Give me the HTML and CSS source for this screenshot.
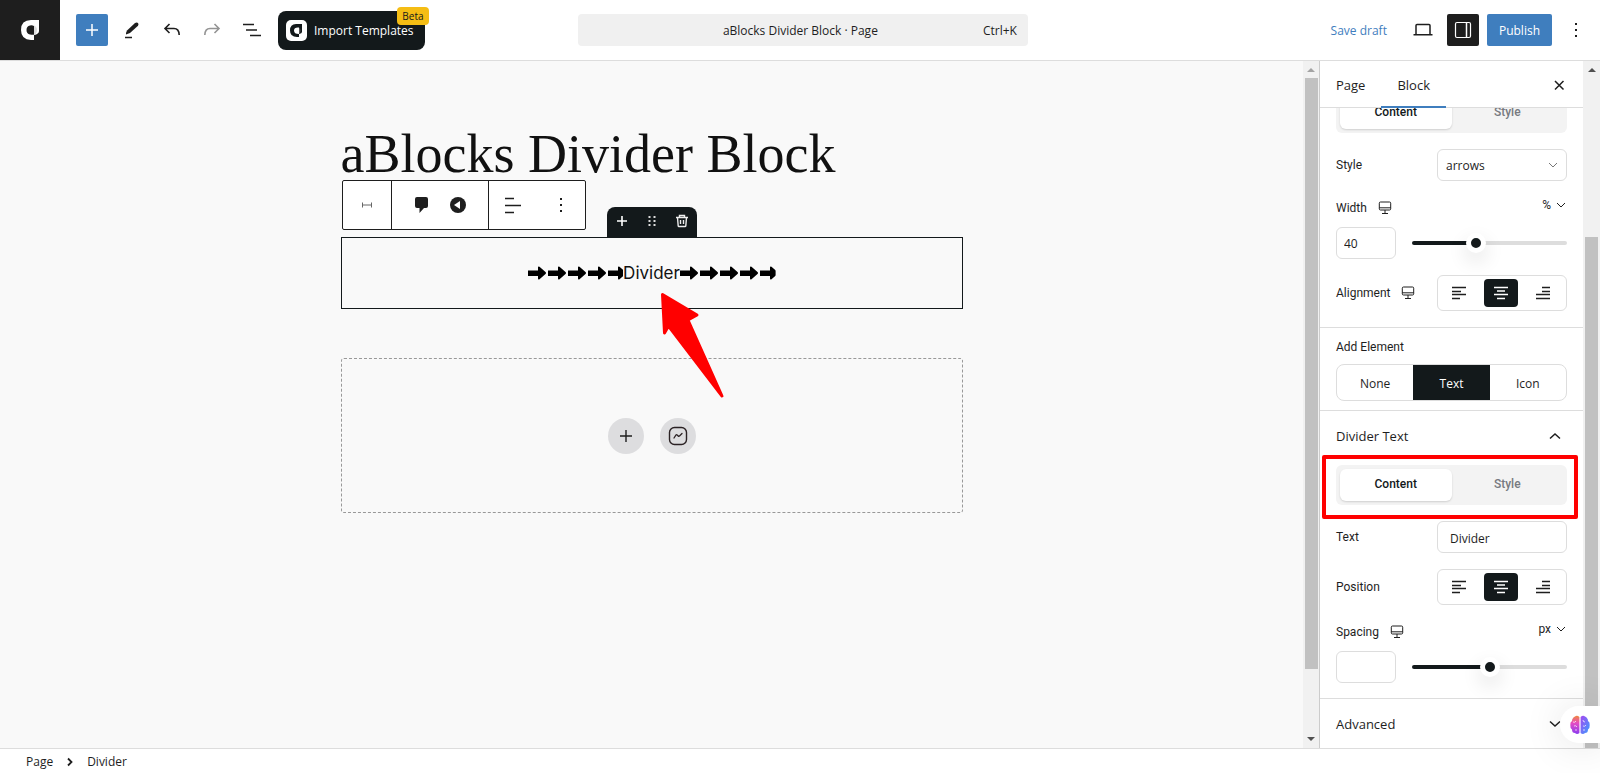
FILE: index.html
```
<!DOCTYPE html>
<html lang="en">
<head>
  <meta charset="UTF-8">
  <title>aBlocks Divider Block</title>
  <link rel="stylesheet" href="styles.css">
</head>
<body>

<!-- shared shapes -->
<svg class="defs" width="0" height="0" aria-hidden="true">
  <defs>
    <pattern id="arrows" width="20" height="14" patternUnits="userSpaceOnUse">
      <path d="M0 4.500h10V1.500q0-1.500 1.500-.8l6 5.200q1 1 0 2l-6 5.400q-1.500.8-1.500-.8V10H0z"/>
    </pattern>
    <symbol id="desktop" viewBox="0 0 14 14">
      <path d="M2.500 1h9q1.200 0 1.200 1.200v5.600q0 1.200-1.200 1.200h-9q-1.200 0-1.200-1.200V2.200Q1.300 1 2.500 1zM1.300 6.800h11.400M7 9v3.500M4 12.500h6" fill="none" stroke="currentColor"/>
    </symbol>
    <symbol id="al-left" viewBox="0 0 14 14">
      <path d="M0 1.500h14M0 5.500h9M0 8.500h14M0 12.500h8" stroke="currentColor" stroke-width="1.300"/>
    </symbol>
    <symbol id="al-center" viewBox="0 0 14 14">
      <path d="M0 1.500h14M3 5h8M0 8.500h14M3 12.500h8" stroke="currentColor" stroke-width="1.300"/>
    </symbol>
    <symbol id="al-right" viewBox="0 0 14 14">
      <path d="M6 1.500h8M6 5.500h8M0 8.500h14M0 12.500h14" stroke="currentColor" stroke-width="1.300"/>
    </symbol>
    <symbol id="chev" viewBox="0 0 12 12">
      <path d="M2 4l4 4 4-4" fill="none" stroke="currentColor"/>
    </symbol>
    <symbol id="chev-bold" viewBox="0 0 14 14">
      <path d="M2 4.500l5 4.500 5-4.500" fill="none" stroke="currentColor" stroke-width="1.500"/>
    </symbol>
  </defs>
</svg>

<header class="header">
  <div class="header-left">
    <a class="logo" href="#" aria-label="Back to dashboard">
      <svg width="18" height="20" viewBox="0 0 18 20"><path d="M18 0v11q0 3-5 4V6q-2-1-4-.5-3.500.8-3.500 4.500T9 14.500q2 .5 4 .3V20h-3Q0 19.500 0 10 0 0 10 0z" fill="#fff"/><path d="M13 5.500q3 1 3 4.500t-3 5z" fill="#ddd"/></svg>
    </a>
    <div class="tools">
      <button class="tool add" aria-label="Add block"><svg width="24" height="24" viewBox="0 0 24 24"><path d="M12 6v12M6 12h12" stroke="#fff" stroke-width="1.500"/></svg></button>
      <button class="tool" aria-label="Tools"><svg width="24" height="24" viewBox="0 0 24 24"><path d="M6 15l1-2.500 8-7.500q1.800-1.200 3 0 1 1.300 0 2.800L10 15l-4 1.500z" fill="#1e1e1e"/><path d="M5 19.500h7" stroke="#1e1e1e" stroke-width="1.500"/></svg></button>
      <button class="tool" aria-label="Undo"><svg width="24" height="24" viewBox="0 0 24 24"><path d="M9.500 6L5 10.500 9.500 15M5 10.500h9q5 0 5.200 6.500" fill="none" stroke="#1e1e1e" stroke-width="1.600"/></svg></button>
      <button class="tool" aria-label="Redo" disabled><svg width="24" height="24" viewBox="0 0 24 24"><path d="M14.500 6l4.500 4.500-4.500 4.500M19 10.500h-9q-5 0-5.200 6.500" fill="none" stroke="#949494" stroke-width="1.600"/></svg></button>
      <button class="tool" aria-label="Document overview"><svg width="24" height="24" viewBox="0 0 24 24"><path d="M3 6.500h11M6 12h11M10 17.500h11" stroke="#1e1e1e" stroke-width="1.500"/></svg></button>
      <button class="import">
        <svg width="21" height="21" viewBox="0 0 21 21"><rect width="21" height="21" rx="5" fill="#fff"/><path d="M16 4v8q0 1.500-3 2V7.500Q8 7 8 10.500q0 3.500 5 3.500v3h-2Q4 17 4 10.500T10 4z" fill="#13191b"/><path d="M13 7.500q1.500 1 1.500 3T13 14z" fill="#555"/></svg>
        <span>Import Templates</span>
        <span class="beta">Beta</span>
      </button>
    </div>
  </div>

  <button class="command">
    <span class="command-title">aBlocks Divider Block · Page</span>
    <span>Ctrl+K</span>
  </button>

  <div class="header-right">
    <button class="save">Save draft</button>
    <button class="tool" aria-label="View"><svg width="24" height="24" viewBox="0 0 24 24"><path d="M5 16V7.500Q5 6.500 6 6.500h12q1 0 1 1V16M2.500 16.800h19" fill="none" stroke="#1e1e1e" stroke-width="1.500"/></svg></button>
    <button class="tool dark" aria-label="Settings"><svg width="24" height="24" viewBox="0 0 24 24"><rect x="4.500" y="4.500" width="15" height="15" rx="1.500" fill="none" stroke="#fff" stroke-width="1.200"/><path d="M15.500 5v14" stroke="#fff" stroke-width="1.500"/></svg></button>
    <button class="publish">Publish</button>
    <button class="tool" aria-label="Options"><svg width="24" height="24" viewBox="0 0 24 24"><path d="M11 5h2v2h-2zM11 11h2v2h-2zM11 17h2v2h-2z" fill="#1e1e1e"/></svg></button>
  </div>
</header>

<div class="main">
  <div class="canvas">
    <div class="content">
      <h1>aBlocks Divider Block</h1>

      <div class="block">
        <div class="toolbar">
          <button class="tb-type" aria-label="Divider"><svg width="12" height="8" viewBox="0 0 12 8"><path d="M1.500 1.500v5M10.500 1.500v5M2 4h8" stroke="#666" stroke-width="1"/></svg></button>
          <div class="tb-group">
            <button aria-label="Comment"><svg width="24" height="24" viewBox="0 0 24 24"><path d="M7 4h9q2 0 2 2v7q0 2-2 2h-2l-4.500 5v-5H7q-2 0-2-2V6q0-2 2-2z" fill="#1e1e1e"/></svg></button>
            <button aria-label="Previous"><svg width="24" height="24" viewBox="0 0 24 24"><circle cx="12" cy="12" r="8" fill="#1e1e1e"/><path d="M14 8v8l-6-4z" fill="#fff"/></svg></button>
          </div>
          <div class="tb-group tb-last">
            <button aria-label="Align"><svg width="24" height="24" viewBox="0 0 24 24"><path d="M4 5.500h9M4 12.500h16M4 19.500h9" stroke="#1e1e1e" stroke-width="1.500"/></svg></button>
            <button aria-label="Options"><svg width="24" height="24" viewBox="0 0 24 24"><path d="M11 5h2v2h-2zM11 11h2v2h-2zM11 17h2v2h-2z" fill="#1e1e1e"/></svg></button>
          </div>
        </div>
        <div class="handle">
          <button aria-label="Add"><svg width="14" height="14" viewBox="0 0 14 14"><path d="M7 2v10M2 7h10" stroke="#fff" stroke-width="1.600"/></svg></button>
          <button aria-label="Drag"><svg width="14" height="14" viewBox="0 0 14 14"><path d="M3.500 2h2v2h-2zM8.500 2h2v2h-2zM3.500 6h2v2h-2zM8.500 6h2v2h-2zM3.500 10h2v2h-2zM8.500 10h2v2h-2z" fill="#ddd"/></svg></button>
          <button aria-label="Delete"><svg width="14" height="14" viewBox="0 0 14 14"><path d="M1 3.500h12M4.500 3.500v-2h5v2M2.500 3.500l.7 8.300q.1.700.8.700h6q.7 0 .8-.7l.7-8.300M5.500 6v4M8.500 6v4" fill="none" stroke="#eee" stroke-width="1.400"/></svg></button>
        </div>
        <div class="divider">
          <svg class="line" height="14"><rect width="100%" height="14" fill="url(#arrows)"/></svg>
          <span>Divider</span>
          <svg class="line" height="14"><rect width="100%" height="14" fill="url(#arrows)"/></svg>
        </div>
        <svg class="pointer" width="70" height="110" viewBox="0 0 70 110"><path d="M6.500 4.500L41 25l-9 5 34 76L12.500 36l-4 7z" fill="#f00" stroke="#f00" stroke-width="3" stroke-linejoin="round"/></svg>
      </div>

      <div class="placeholder">
        <button aria-label="Add container"><svg width="24" height="24" viewBox="0 0 24 24"><path d="M12 6v12M6 12h12" stroke="#1e1e1e" stroke-width="1.400"/></svg></button>
        <button aria-label="Template library"><svg width="20" height="20" viewBox="0 0 20 20"><rect x="1.500" y="1.500" width="17" height="17" rx="5" fill="none" stroke="#2b2224" stroke-width="1.400"/><path d="M6 12l2-3q.6-.7 1.200 0l1 1q.6.600 1.300 0L14 7.500" fill="none" stroke="#2b2224" stroke-width="1.300" stroke-linecap="round"/></svg></button>
      </div>
    </div>
  </div>

  <div class="scroll scroll-canvas">
    <i class="up"></i>
    <div class="thumb"></div>
    <i class="down"></i>
  </div>

  <aside class="sidebar">
    <div class="tabs">
      <button>Page</button>
      <button class="active">Block</button>
      <button class="close" aria-label="Close settings"><svg width="12" height="12" viewBox="0 0 12 12"><path d="M2 2l8.500 8.500M10.500 2L2 10.500" stroke="#1e1e1e" stroke-width="1.500"/></svg></button>
    </div>

    <div class="panels">
      <section class="panel panel-first">
        <div class="switch">
          <button class="active">Content</button>
          <button>Style</button>
        </div>
        <div class="row">
          <label for="style">Style</label>
          <div class="select">
            <select id="style"><option>arrows</option></select>
            <svg width="12" height="12"><use href="#chev"/></svg>
          </div>
        </div>
        <div class="range-head">
          <label for="width">Width</label>
          <svg width="14" height="14"><use href="#desktop"/></svg>
          <button class="unit">% <svg width="12" height="12"><use href="#chev"/></svg></button>
        </div>
        <div class="range">
          <input id="width" type="text" value="40">
          <input type="range" value="40" aria-label="Width" style="--fill: 40%">
        </div>
        <div class="row">
          <span class="label">Alignment</span>
          <svg width="14" height="14"><use href="#desktop"/></svg>
          <div class="align">
            <button aria-label="Left"><svg width="14" height="14"><use href="#al-left"/></svg></button>
            <button class="active" aria-label="Center"><svg width="14" height="14"><use href="#al-center"/></svg></button>
            <button aria-label="Right"><svg width="14" height="14"><use href="#al-right"/></svg></button>
          </div>
        </div>
      </section>

      <section class="panel panel-element">
        <span class="label">Add Element</span>
        <div class="group">
          <button>None</button>
          <button class="active">Text</button>
          <button>Icon</button>
        </div>
      </section>

      <section class="panel panel-text">
        <button class="panel-title">Divider Text <svg class="flip" width="14" height="14"><use href="#chev-bold"/></svg></button>
        <div class="marked">
          <div class="switch">
            <button class="active">Content</button>
            <button>Style</button>
          </div>
        </div>
        <div class="row">
          <label for="text">Text</label>
          <input id="text" type="text" value="Divider">
        </div>
        <div class="row">
          <span class="label">Position</span>
          <div class="align">
            <button aria-label="Left"><svg width="14" height="14"><use href="#al-left"/></svg></button>
            <button class="active" aria-label="Center"><svg width="14" height="14"><use href="#al-center"/></svg></button>
            <button aria-label="Right"><svg width="14" height="14"><use href="#al-right"/></svg></button>
          </div>
        </div>
        <div class="range-head">
          <label for="spacing">Spacing</label>
          <svg width="14" height="14"><use href="#desktop"/></svg>
          <button class="unit">px <svg width="12" height="12"><use href="#chev"/></svg></button>
        </div>
        <div class="range">
          <input id="spacing" type="text">
          <input type="range" value="50" aria-label="Spacing" style="--fill: 50%">
        </div>
      </section>

      <section class="panel panel-advanced">
        <button class="panel-title">Advanced <svg width="14" height="14"><use href="#chev-bold"/></svg></button>
      </section>
    </div>
  </aside>

  <div class="scroll scroll-side">
    <i class="up"></i>
    <div class="thumb"></div>
  </div>
</div>

<footer class="footer">
  <a href="#">Page</a>
  <svg width="8" height="10" viewBox="0 0 8 10"><path d="M2 1.500L5.500 5 2 8.500" fill="none" stroke="#1e1e1e" stroke-width="1.800"/></svg>
  <span>Divider</span>
</footer>

<button class="assistant" aria-label="Assistant">
  <svg width="20" height="20" viewBox="0 0 20 20">
    <defs>
      <linearGradient id="brain-l" x1="0" y1="0" x2="0" y2="1"><stop offset="0" stop-color="#f0883e"/><stop offset=".4" stop-color="#e54bc4"/><stop offset="1" stop-color="#8b3cf0"/></linearGradient>
      <linearGradient id="brain-r" x1="0" y1="0" x2="1" y2="1"><stop offset="0" stop-color="#a548f0"/><stop offset="1" stop-color="#3aa0ff"/></linearGradient>
    </defs>
    <path d="M9.400 2v16Q7 20 5 18q-3 0-3-3.500Q0 13 .3 10 0 7 2 6q0-3 3-4.500 2-1.500 4.400.5z" fill="url(#brain-l)"/>
    <path d="M10.600 2v16q2.400 2 4.400 0 3 0 3-3.500 2-1.500 1.700-4.500.3-3-1.700-4 0-3-3-4.500-2-1.500-4.400.5z" fill="url(#brain-r)"/>
    <path d="M3 7q2 1 3-1M4 11q2-1 3 1M5 15h2M13 5q0 2 2 2M13 11q2 1 3-1M13 15h2" fill="none" stroke="#fff" stroke-opacity=".7"/>
  </svg>
</button>

</body>
</html>
```
FILE: styles.css
```
*{
  box-sizing: border-box;
}
body{
  margin: 0;
  height: 100vh;
  display: flex;
  flex-direction: column;
  overflow: hidden;
  background: #fff;
  color: #1e1e1e;
  font: 12px/20px "Open Sans", "Noto Sans", sans-serif;
}
button,
input,
select{
  font: inherit;
  color: inherit;
}
button{
  display: flex;
  align-items: center;
  justify-content: center;
  padding: 0;
  border: 0;
  background: none;
}
a{
  color: inherit;
  text-decoration: none;
}
svg{
  flex: none;
}
.defs{
  position: absolute;
}

/* header */
.header{
  flex: none;
  display: grid;
  grid-template-columns: 1fr 450px 0.99fr;
  align-items: center;
  border-bottom: 1px solid #ddd;
}
.header-left,
.tools,
.header-right{
  display: flex;
  align-items: center;
}
.logo{
  width: 60px;
  height: 60px;
  display: flex;
  align-items: center;
  justify-content: center;
  background: #1e1e1e;
}
.tools{
  gap: 8px;
  padding-left: 16px;
}
.tool{
  width: 32px;
  height: 32px;
  border-radius: 2px;
}
.add{
  background: #3f7ebe;
}
.dark{
  background: #1e1e1e;
}
.import{
  position: relative;
  height: 39px;
  gap: 7px;
  padding: 0 11px 0 8px;
  margin-left: 2px;
  border-radius: 8px;
  background: #13191b;
  color: #fff;
}
.import span{
  padding-top: 2px;
}
.import .beta{
  position: absolute;
  top: -4px;
  right: -4px;
  padding: 0 5px;
  border-radius: 4px;
  background: #f5bd14;
  color: #13191b;
  font-size: 10px;
  line-height: 18px;
}
.command{
  height: 32px;
  padding: 2px 11px 0 12px;
  border-radius: 4px;
  background: #f0f0f0;
}
.command-title{
  flex: 1;
  padding-left: 28px;
}
.header-right{
  justify-content: flex-end;
  gap: 8px;
  padding-right: 8px;
}
.save{
  padding: 2px 12px 0;
  color: #3f7ebe;
}
.publish{
  height: 32px;
  padding: 2px 12px 0;
  border-radius: 2px;
  background: #3f7ebe;
  color: #fff;
  font-weight: 500;
}

/* canvas */
.main{
  flex: 1;
  min-height: 0;
  display: flex;
}
.canvas{
  flex: 1;
  overflow: hidden;
  background: #f9f9f9;
}
.content{
  max-width: 622px;
  margin: 0 auto;
  padding-top: 58px;
}
h1{
  margin: 0 0 48px;
  color: #111;
  font: 54px/70px "Liberation Serif", serif;
}
.block{
  position: relative;
  border: 1px solid #13191b;
}
.divider{
  width: 40%;
  height: 70px;
  margin: 0 auto;
  display: flex;
  align-items: center;
  color: #111;
  font: 17px/24px Inter, sans-serif;
}
.line{
  flex: 1;
  min-width: 0;
}
.toolbar{
  position: absolute;
  left: 0;
  bottom: 78px;
  height: 50px;
  display: flex;
  border: 1px solid #1e1e1e;
  border-radius: 2px;
  background: #fff;
}
.tb-type{
  width: 49px;
  border-right: 1px solid #1e1e1e;
}
.tb-group{
  display: flex;
  align-items: center;
  gap: 12px;
  padding: 0 18px;
  border-right: 1px solid #1e1e1e;
}
.tb-last{
  gap: 24px;
  padding: 0 12px;
  border: 0;
}
.handle{
  position: absolute;
  left: 50%;
  bottom: 100%;
  margin-left: -45px;
  width: 90px;
  height: 31px;
  display: flex;
  border-radius: 8px 8px 0 0;
  background: #13191b;
}
.handle button{
  flex: 1;
  padding-bottom: 3px;
}
.pointer{
  position: absolute;
  left: 50%;
  top: 52px;
  margin-left: 4px;
  z-index: 1;
}
.placeholder{
  height: 155px;
  margin-top: 49px;
  display: flex;
  align-items: center;
  justify-content: center;
  gap: 16px;
  border: 1px dashed #999;
  border-radius: 3px;
}
.placeholder button{
  width: 36px;
  height: 36px;
  border-radius: 50%;
  background: #dddddf;
}

/* scrollbars */
.scroll{
  flex: none;
  width: 17px;
  display: flex;
  flex-direction: column;
  align-items: center;
  background: #f1f1f1;
}
.scroll-canvas{
  width: 16px;
}
.thumb{
  width: 13px;
  margin-top: 6px;
  background: #c1c1c1;
}
.scroll-canvas .thumb{
  flex: 0 0 86%;
}
.scroll-side .thumb{
  flex: 1;
  margin-top: 165px;
}
.up,
.down{
  border: 4px solid transparent;
}
.up{
  margin-top: 3px;
  border-top: 0;
  padding-top: 3px;
  border-bottom: 4px solid #505050;
}
.scroll-canvas .up{
  border-bottom-color: #a3a3a3;
}
.down{
  margin: auto 0 7px;
  border-top: 4px solid #505050;
  border-bottom: 0;
}
.up{
  padding-top: 0;
  margin-top: 7px;
}

/* sidebar */
.sidebar{
  flex: none;
  width: 264px;
  display: flex;
  flex-direction: column;
  border-left: 1px solid #ccc;
}
.tabs{
  flex: none;
  height: 47px;
  display: flex;
  border-bottom: 1px solid #ddd;
}
.tabs button{
  height: 47px;
  padding: 0 16px;
  font-size: 13px;
}
.tabs .active{
  position: relative;
  border-bottom: 2px solid #3f7ebe;
  padding-top: 2px;
}
.tabs .close{
  margin-left: auto;
  padding: 0 18px;
}
.panels{
  flex: 1;
  min-height: 0;
  overflow: hidden;
  font-family: Roboto, sans-serif;
}
.panel{
  display: flex;
  flex-direction: column;
  gap: 16px;
  padding: 0 16px;
  border-bottom: 1px solid #ddd;
}
/* scrolled a little under the tabs */
.panel-first{
  margin-top: -15px;
  padding-bottom: 16px;
}
.switch{
  height: 40px;
  display: flex;
  padding: 4px;
  border-radius: 6px;
  background: #f3f3f3;
}
.switch button{
  flex: 1;
  border-radius: 6px;
  color: #777a80;
  font-weight: 500;
  padding-bottom: 2px;
}
.switch .active{
  background: #fff;
  color: #13191b;
  box-shadow: 0 1px 2px rgba(0, 0, 0, .15);
}
.row{
  display: flex;
  align-items: center;
}
.row > svg,
.range-head > svg{
  margin-left: 11px;
}
.row input,
.select,
.align{
  width: 130px;
  margin-left: auto;
}
input[type=text],
select{
  height: 32px;
  border: 1px solid #ddd;
  border-radius: 6px;
  background: #fff;
  font-family: "Open Sans", sans-serif;
}
.row input[type=text]{
  padding: 2px 12px 0;
}
.select{
  position: relative;
  display: flex;
}
select{
  width: 100%;
  padding: 2px 8px 0;
  appearance: none;
}
.select svg{
  position: absolute;
  right: 8px;
  top: 10px;
  color: #777;
}
.range-head{
  height: 20px;
  display: flex;
  align-items: center;
  padding-top: 2px;
}
.unit{
  gap: 4px;
  margin-left: auto;
  padding-bottom: 6px;
}
.range{
  display: flex;
  align-items: center;
  gap: 16px;
  margin-top: -6px;
}
.range input[type=text]{
  width: 60px;
  padding: 0 7px;
}
input[type=range]{
  flex: 1;
  min-width: 0;
  height: 4px;
  margin: 0;
  appearance: none;
  border-radius: 2px;
  background: linear-gradient(to right, #13191b var(--fill), #ddd var(--fill));
}
input[type=range]::-webkit-slider-thumb{
  appearance: none;
  width: 20px;
  height: 20px;
  border: 5px solid #fff;
  border-radius: 50%;
  background: #13191b;
  box-shadow: 0 8px 20px rgba(0, 0, 0, .12);
}
.align{
  height: 36px;
  display: flex;
  gap: 8px;
  padding: 3px 4px;
  border: 1px solid #ddd;
  border-radius: 6px;
}
.align button{
  width: 34px;
  border-radius: 4px;
}
.align .active,
.group .active{
  background: #13191b;
  color: #fff;
}
.panel-element{
  gap: 7px;
  padding-top: 9px;
  padding-bottom: 9px;
}
.group{
  height: 37px;
  display: flex;
  border: 1px solid #ddd;
  border-radius: 8px;
  font-family: "Open Sans", sans-serif;
}
.group button{
  flex: 1;
  padding-top: 2px;
}
.panel-text{
  padding-bottom: 15px;
}
.panel-title{
  height: 48px;
  justify-content: space-between;
  padding: 2px 5px 0 0;
  font-family: "Open Sans", sans-serif;
  font-size: 13px;
}
.flip{
  transform: rotate(180deg);
}
.marked{
  margin: -20px -11px -14px -14px;
  padding: 6px 7px 10px 10px;
  border: 4px solid #f00;
  border-radius: 2px;
}
.panel-advanced{
  border: 0;
}

/* footer */
.footer{
  flex: none;
  height: 25px;
  display: flex;
  align-items: center;
  gap: 13px;
  padding: 1px 26px 0;
  border-top: 1px solid #ddd;
}
.assistant{
  position: absolute;
  right: 0;
  bottom: 30px;
  width: 40px;
  height: 37px;
  border-radius: 19px 0 0 19px;
  background: #fff;
  box-shadow: 0 2px 40px rgba(0, 0, 0, .12);
}
```
